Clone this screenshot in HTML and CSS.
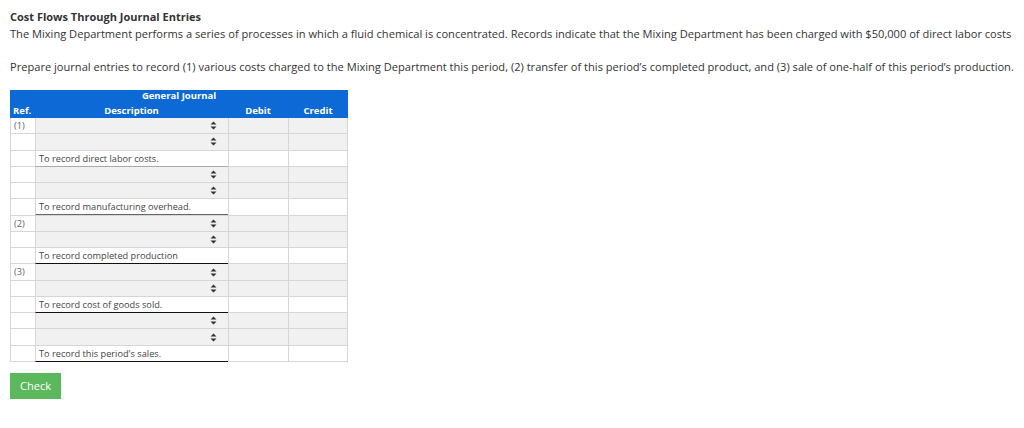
FILE: index.html
```html
<!DOCTYPE html>
<html>
<head>
<meta charset="utf-8">
<link rel="stylesheet" href="styles.css">
</head>
<body>
<div class="page">
  <div class="title">Cost Flows Through Journal Entries</div>
  <p class="intro">The Mixing Department performs a series of processes in which a fluid chemical is concentrated. Records indicate that the Mixing Department has been charged with $50,000 of direct labor costs</p>
  <p class="prompt">Prepare journal entries to record (1) various costs charged to the Mixing Department this period, (2) transfer of this period’s completed product, and (3) sale of one-half of this period’s production.</p>

  <div class="journal">
    <div class="head">
      <div class="gj">General Journal</div>
      <div class="hrow">
        <div class="h-ref">Ref.</div>
        <div class="h-desc">Description</div>
        <div class="h-num">Debit</div>
        <div class="h-num">Credit</div>
      </div>
    </div>
    <div class="body" id="jbody"></div>
  </div>

  <button class="check">Check</button>
</div>
<script src="app.js"></script>
</body>
</html>
```

FILE: app.js
```js
var rows = [
  ["(1)", "sel"], ["", "sel"], ["", "text", "To record direct labor costs.", "gray"],
  ["", "sel"], ["", "sel"], ["", "text", "To record manufacturing overhead.", "mid"],
  ["(2)", "sel"], ["", "sel"], ["", "text", "To record completed production", "dark"],
  ["(3)", "sel"], ["", "sel"], ["", "text", "To record cost of goods sold.", "dark"],
  ["", "sel"], ["", "sel"], ["", "text", "To record this period's sales.", "dark"]
];
var arrows = '<svg class="arr" width="7" height="9" viewBox="0 0 7 9"><path d="M3.5 0.5 L6.5 3.5 L0.5 3.5 Z M0.5 5.5 L6.5 5.5 L3.5 8.5 Z" fill="#333"/></svg>';
var html = "";
rows.forEach(function (r) {
  var cls = r[1] === "sel" ? "row sel" : "row txt";
  html += '<div class="' + cls + '">';
  html += '<div class="c-ref">' + r[0] + '</div>';
  if (r[1] === "sel") {
    html += '<div class="c-desc">' + arrows + '</div>';
  } else {
    html += '<div class="c-desc ' + r[3] + '">' + r[2] + '</div>';
  }
  html += '<div class="c-num"></div><div class="c-num"></div></div>';
});
document.getElementById("jbody").innerHTML = html;
```

FILE: styles.css
```css
html, body {
  margin: 0;
  padding: 0;
  background: #fff;
}
body {
  font-family: "Open Sans", "Liberation Sans", sans-serif;
  color: #333;
  font-size: 11.1px;
}
.page {
  padding: 9px 10px 0 10px;
}
.title {
  font-weight: bold;
  font-size: 11px;
  line-height: 15px;
  color: #333;
}
.intro {
  margin: 2px 0 0 0;
  line-height: 15px;
  white-space: nowrap;
}
.prompt {
  margin: 18px 0 0 0;
  line-height: 15px;
  white-space: nowrap;
}
.journal {
  margin-top: 16px;
  width: 338px;
}
.head {
  background: #0c69d6;
  color: #fff;
  font-weight: bold;
  font-size: 9.5px;
  height: 28px;
  box-sizing: border-box;
}
.gj {
  text-align: center;
  line-height: 12px;
}
.hrow {
  display: grid;
  grid-template-columns: 25px 193px 60px 60px;
  line-height: 13px;
  padding-top: 2px;
}
.h-ref {
  padding-left: 3px;
}
.h-desc, .h-num {
  text-align: center;
}
.row {
  display: grid;
  grid-template-columns: 25px 193px 60px 60px;
  height: 16.27px;
  box-sizing: border-box;
  border-bottom: 1px solid #d6d6d6;
}
.row > div {
  border-left: 1px solid #d6d6d6;
  box-sizing: border-box;
}
.row > div:last-child {
  border-right: 1px solid #d6d6d6;
}
.c-ref {
  color: #666;
  font-size: 9.3px;
  line-height: 15px;
  padding-left: 3px;
}
.sel .c-desc, .sel .c-num {
  background: #f1f1f1;
}
.sel .c-desc {
  display: flex;
  justify-content: flex-end;
  align-items: center;
  padding-right: 11px;
}
.arr {
  display: block;
}
.txt .c-desc {
  font-size: 9.2px;
  line-height: 15px;
  padding-left: 3px;
  color: #444;
}
.txt .c-desc.gray { border-bottom: 1px solid #aaa; }
.txt .c-desc.mid { border-bottom: 1px solid #666; }
.txt .c-desc.dark { border-bottom: 1.5px solid #111; }
.check {
  display: block;
  margin-top: 11px;
  background: #5cb85c;
  border: none;
  color: #fff;
  font-family: "Open Sans", "Liberation Sans", sans-serif;
  font-size: 11px;
  width: 51px;
  height: 26px;
  padding: 0;
  cursor: pointer;
}
```
